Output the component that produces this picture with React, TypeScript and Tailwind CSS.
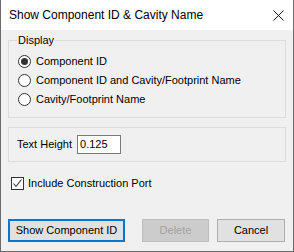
import React from 'react';

const font = { fontFamily: '"Liberation Sans", Arial, sans-serif' };

function Radio({ label, checked }: { label: string; checked?: boolean }) {
  return (
    <div className="flex items-center h-[19px]">
      <span className="w-[13px] h-[13px] rounded-full border border-[#333333] bg-white flex items-center justify-center">
        {checked && <span className="w-[7px] h-[7px] rounded-full bg-[#333333]" />}
      </span>
      <span className="ml-[5px] text-[11px] text-black leading-[15px]">{label}</span>
    </div>
  );
}

export default function App() {
  return (
    <div
      className="w-[294px] h-[252px] bg-[#f0f0f0] border-x border-b border-[#6b6b6b] flex flex-col overflow-hidden"
      style={font}
    >
      {/* title bar */}
      <div className="h-[30px] bg-white flex items-center justify-between pl-[8px] pr-[9px] shrink-0">
        <span className="text-[12px] text-black leading-[15px]">Show Component ID &amp; Cavity Name</span>
        <svg width="11" height="11" viewBox="0 0 11 11" className="mt-[1px]">
          <path d="M0.5 0.5 L10.5 10.5 M10.5 0.5 L0.5 10.5" stroke="#111" strokeWidth="1" />
        </svg>
      </div>

      <div className="flex flex-col pl-[7px]">
        <fieldset className="mt-[3px] w-[278px] border border-[#dcdcdc] pl-[9px] pt-[5px] pb-[8px]">
          <legend className="ml-[-1px] px-[1px] text-[11px] leading-[14px] text-black">Display</legend>
          <Radio label="Component ID" checked />
          <Radio label="Component ID and Cavity/Footprint Name" />
          <Radio label="Cavity/Footprint Name" />
        </fieldset>

        <div className="mt-[9px] w-[278px] h-[35px] border border-[#dcdcdc] flex items-center pl-[8px]">
          <span className="text-[11px] text-black leading-[15px]">Text Height</span>
          <div className="ml-[5px] w-[44px] h-[19px] bg-white border border-[#7a7a7a] flex items-center pl-[2px] text-[11px] leading-[15px] text-black">
            0.125
          </div>
        </div>

        <div className="mt-[15px] ml-[3px] flex items-center h-[13px]">
          <span className="w-[13px] h-[13px] border border-[#333333] bg-white flex items-center justify-center">
            <svg width="11" height="11" viewBox="0 0 11 11">
              <path d="M1.5 5.5 L4 8.5 L9.5 1.5" fill="none" stroke="#333" strokeWidth="1.1" />
            </svg>
          </span>
          <span className="ml-[4px] text-[11px] leading-[15px] text-black">Include Construction Port</span>
        </div>

        <div className="mt-[29px] flex items-center h-[23px]">
          <button className="w-[117px] h-[23px] border-2 border-[#0078d7] bg-[#e1e1e1] text-[11px] text-black leading-[15px]">
            Show Component ID
          </button>
          <button className="ml-[17px] w-[67px] h-[23px] border border-[#bfbfbf] bg-[#cccccc] text-[11px] text-[#a3a3a3] leading-[15px]">
            Delete
          </button>
          <button className="ml-[8px] w-[68px] h-[23px] border border-[#adadad] bg-[#e1e1e1] text-[11px] text-black leading-[15px]">
            Cancel
          </button>
        </div>
      </div>
    </div>
  );
}
